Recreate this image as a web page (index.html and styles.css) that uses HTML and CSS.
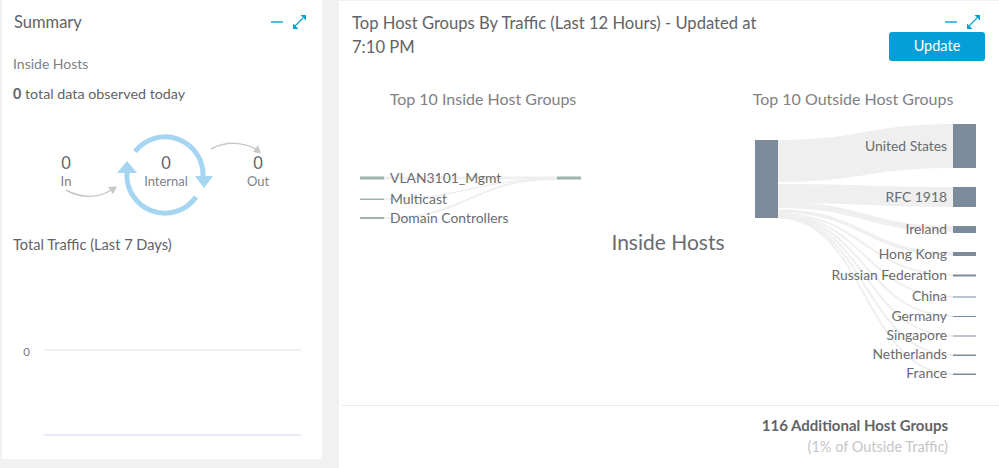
FILE: index.html
```html
<!DOCTYPE html>
<html lang="en">
<head>
  <meta charset="UTF-8">
  <meta name="viewport" content="width=device-width, initial-scale=1.0">
  <title>Host Group Dashboard</title>
  <link rel="stylesheet" href="styles.css">
</head>
<body>

<div class="page">

  <!-- Summary card -->
  <div class="card summary">
    <div class="card-head">
      <h3 class="card-title">Summary</h3>
      <div class="card-icons">
        <svg width="36" height="14" viewBox="0 0 36 14">
          <path d="M1 7H13" stroke="#049fd9" stroke-width="1.4"/>
          <path d="M25 11L33 3" stroke="#049fd9" stroke-width="1.1"/>
          <path d="M36 0V5.500L30.500 0Z M23 14V8.500L28.500 14Z" fill="#049fd9"/>
        </svg>
      </div>
    </div>
    <div class="sub-title">Inside Hosts</div>
    <div class="observed"><strong>0</strong> total data observed today</div>

    <svg class="flow" width="320" height="92" viewBox="2 128 320 92">
      <path d="M135 150.500A38 38 0 0 1 203 175" fill="none" stroke="#a5d5f0" stroke-width="5"/>
      <path d="M195 175H213L204 187Z" fill="#a5d5f0"/>
      <path d="M196 196A38 38 0 0 1 127 171" fill="none" stroke="#a5d5f0" stroke-width="5"/>
      <path d="M117 172H137L127 160Z" fill="#a5d5f0"/>
      <path d="M66 189C80 197 98 198 111 189" fill="none" stroke="#c8c8c8" stroke-width="1.5"/>
      <path d="M117 185.500L108 186L113 193Z" fill="#c8c8c8"/>
      <path d="M211 148C226 140 243 141 256 148" fill="none" stroke="#c8c8c8" stroke-width="1.5"/>
      <path d="M261 152.500L253 151L258 144Z" fill="#c8c8c8"/>
      <text class="flow-num" x="66" y="168">0</text>
      <text class="flow-label" x="66" y="185">In</text>
      <text class="flow-num" x="166" y="168">0</text>
      <text class="flow-label" x="166" y="185">Internal</text>
      <text class="flow-num" x="258" y="168">0</text>
      <text class="flow-label" x="258" y="185">Out</text>
    </svg>

    <div class="traffic-title">Total Traffic (Last 7 Days)</div>
    <div class="traffic-chart">
      <div class="chart-row">
        <span class="chart-tick">0</span>
        <div class="chart-line"></div>
      </div>
      <div class="chart-axis"></div>
    </div>
  </div>

  <!-- Top host groups card -->
  <div class="card groups">
    <div class="groups-head">
      <h3 class="groups-title">Top Host Groups By Traffic (Last 12 Hours) - Updated at 7:10 PM</h3>
      <div class="groups-actions">
        <svg class="groups-icons" width="36" height="14" viewBox="0 0 36 14">
          <path d="M1 7H13" stroke="#049fd9" stroke-width="1.4"/>
          <path d="M25 11L33 3" stroke="#049fd9" stroke-width="1.1"/>
          <path d="M36 0V5.500L30.500 0Z M23 14V8.500L28.500 14Z" fill="#049fd9"/>
        </svg>
        <button class="update-btn">Update</button>
      </div>
    </div>

    <svg class="sankey" width="660" height="314" viewBox="339 88 660 314">
      <text class="col-title" x="483" y="105">Top 10 Inside Host Groups</text>
      <text class="col-title" x="853" y="105">Top 10 Outside Host Groups</text>

      <!-- inside flows -->
      <g fill="none" stroke="#efefef">
        <path d="M384 178H557" stroke-width="3"/>
        <path d="M384 199C470 199 470 179 557 179" stroke-width="1.500"/>
        <path d="M384 218C470 218 470 179 557 179" stroke-width="2"/>
      </g>
      <g fill="#9db3ad">
        <rect x="360" y="176.500" width="24" height="3"/>
        <rect x="360" y="198.500" width="24" height="1.500"/>
        <rect x="360" y="217" width="24" height="2"/>
        <rect x="557" y="176.500" width="24" height="3"/>
      </g>
      <text class="node-label" x="390" y="183">VLAN3101_Mgmt</text>
      <text class="node-label" x="390" y="204">Multicast</text>
      <text class="node-label" x="390" y="223">Domain Controllers</text>

      <text class="center-label" x="668" y="250">Inside Hosts</text>

      <!-- outside flows -->
      <path d="M778 140C860 140 870 124 953 124V168C870 168 860 182 778 182Z" fill="#efefef"/>
      <path d="M778 184C860 184 870 187 953 187V207C870 207 860 203 778 203Z" fill="#efefef"/>
      <g fill="none" stroke="#efefef">
        <path d="M778 205C865 205 865 229 953 229" stroke-width="6"/>
        <path d="M778 211C865 211 865 254 953 254" stroke-width="3.500"/>
        <path d="M778 214C865 214 865 275 953 275" stroke-width="2"/>
        <path d="M778 215C865 215 865 297 953 297" stroke-width="2"/>
        <path d="M778 216C865 216 865 316 953 316" stroke-width="2"/>
        <path d="M778 216.500C865 216.500 865 336 953 336" stroke-width="2"/>
        <path d="M778 217C865 217 865 355 953 355" stroke-width="2"/>
        <path d="M778 217.500C865 217.500 865 374 953 374" stroke-width="2"/>
      </g>
      <g fill="#7b8b9b">
        <rect x="755" y="140" width="23" height="78"/>
        <rect x="953" y="124" width="23" height="44"/>
        <rect x="953" y="187" width="23" height="20"/>
        <rect x="953" y="226" width="23" height="7"/>
        <rect x="953" y="252" width="23" height="4"/>
        <rect x="953" y="274.500" width="23" height="2"/>
        <rect x="953" y="296.500" width="23" height="1"/>
        <rect x="953" y="316" width="23" height="1"/>
        <rect x="953" y="335.500" width="23" height="1"/>
        <rect x="953" y="354.500" width="23" height="1.500"/>
        <rect x="953" y="373.500" width="23" height="1.500"/>
      </g>
      <text class="node-label end" x="947" y="151">United States</text>
      <text class="node-label end" x="947" y="202">RFC 1918</text>
      <text class="node-label end" x="947" y="234">Ireland</text>
      <text class="node-label end" x="947" y="259">Hong Kong</text>
      <text class="node-label end" x="947" y="280">Russian Federation</text>
      <text class="node-label end" x="947" y="301">China</text>
      <text class="node-label end" x="947" y="321">Germany</text>
      <text class="node-label end" x="947" y="340">Singapore</text>
      <text class="node-label end" x="947" y="359">Netherlands</text>
      <text class="node-label end" x="947" y="378">France</text>
    </svg>

    <div class="groups-foot">
      <div class="foot-count">116 Additional Host Groups</div>
      <div class="foot-share">(1% of Outside Traffic)</div>
    </div>
  </div>

</div>

</body>
</html>
```

FILE: styles.css
```css
/* Basic page styles */
html, body {
  margin: 0;
  padding: 0;
  height: 468px;
  overflow: hidden;
}
body {
  font-family: Lato, "Liberation Sans", sans-serif;
  background-color: #f1f1f1;
  color: #626366;
}
.page {
  display: flex;
  align-items: flex-start;
  gap: 17px;
  padding-left: 2px;
}
.card {
  background-color: #fff;
}

/* Summary */
.summary {
  width: 320px;
  height: 459px;
  flex-shrink: 0;
}
.card-head {
  display: flex;
  justify-content: space-between;
  align-items: center;
  height: 24px;
  padding: 10px 16px 0 12px;
}
.card-title {
  margin: 0;
  font-size: 16.5px;
  font-weight: 400;
}
.card-icons {
  display: flex;
}
.sub-title {
  margin: 18px 0 0 11px;
  font-size: 14px;
  line-height: 24px;
  color: #808184;
}
.observed {
  margin: 6px 0 0 11px;
  font-size: 14.3px;
  line-height: 24px;
}
.flow {
  display: block;
  margin-top: 23px;
}
.flow-num {
  font-size: 16.5px;
  text-anchor: middle;
  fill: #626366;
}
.flow-label {
  font-size: 13px;
  text-anchor: middle;
  fill: #808184;
}
.traffic-title {
  margin: 12px 0 0 11px;
  font-size: 14.6px;
  line-height: 24px;
}
.traffic-chart {
  margin-top: 84px;
  padding-right: 21px;
}
.chart-row {
  display: flex;
  align-items: center;
}
.chart-tick {
  width: 42px;
  padding: 4px 14px 0 0;
  box-sizing: border-box;
  text-align: right;
  font-size: 11.5px;
  line-height: 14px;
  color: #77787b;
}
.chart-line {
  flex: 1;
  height: 2px;
  background-color: #f0f0f0;
}
.chart-axis {
  margin: 75px 0 0 42px;
  height: 2px;
  background-color: #e6e9f8;
}

/* Top host groups */
.groups {
  flex: 1;
  height: 467px;
  margin-top: 1px;
}
.groups-head {
  display: flex;
  justify-content: space-between;
  height: 87px;
  padding: 10px 14px 0 13px;
  box-sizing: border-box;
}
.groups-title {
  width: 420px;
  margin: 0;
  font-size: 16.6px;
  font-weight: 400;
  line-height: 24px;
}
.groups-actions {
  display: flex;
  flex-direction: column;
  align-items: flex-end;
  gap: 3px;
}
.groups-icons {
  margin: 4px 5px 0 0;
}
.update-btn {
  width: 96px;
  height: 29px;
  padding: 0 0 3px;
  border: none;
  border-radius: 3px;
  background-color: #049fd9;
  color: #fff;
  font-family: inherit;
  font-size: 14.5px;
}
.sankey {
  display: block;
}
.col-title {
  font-size: 16px;
  text-anchor: middle;
  fill: #808184;
}
.node-label {
  font-size: 13.9px;
  fill: #6a6c70;
}
.node-label.end {
  text-anchor: end;
}
.center-label {
  font-size: 21px;
  text-anchor: middle;
  fill: #6a6c70;
}
.groups-foot {
  margin: 3px 0 0 3px;
  padding: 9px 51px 0 0;
  border-top: 1px solid #e8e8e8;
  text-align: right;
  font-size: 15px;
  line-height: 21px;
}
.foot-count {
  font-weight: 700;
}
.foot-share {
  font-size: 14.5px;
  color: #c4c6c9;
}
```
